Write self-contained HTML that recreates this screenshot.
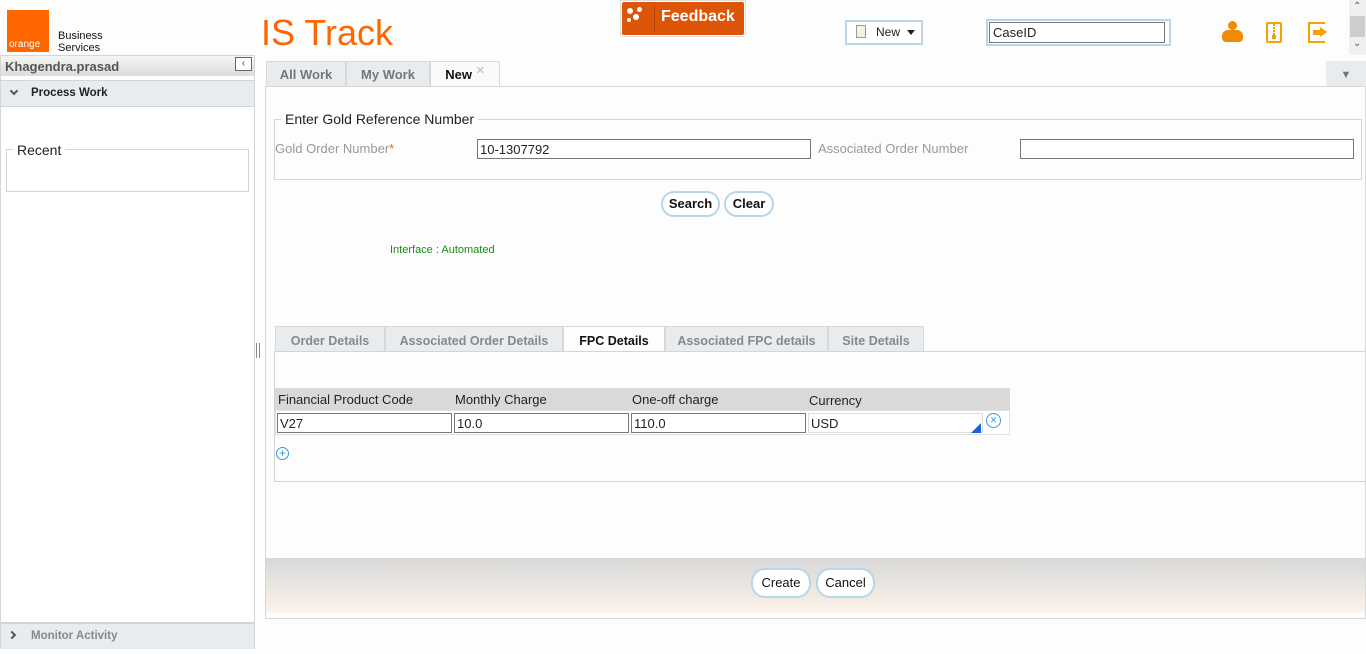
<!DOCTYPE html>
<html><head><meta charset="utf-8"><style>
*{box-sizing:border-box;margin:0;padding:0}
body{width:1366px;height:654px;background:#fdfdfd;font-family:"Liberation Sans","DejaVu Sans",sans-serif;position:relative;overflow:hidden;font-size:13px;color:#222}
.a{position:absolute}
.inp{position:absolute;background:#fff;border:1px solid #777;height:20px;font-size:13px;padding:2px 2px;line-height:15px}
.btn{position:absolute;background:#fff;border:2px solid #b9d6e8;border-radius:14px;font-weight:bold;font-size:13px;text-align:center;color:#111}
.tab{position:absolute;top:61px;height:26px;background:#e9ecef;border:1px solid #d8d8d8;color:#777;font-weight:bold;font-size:13px;text-align:center;line-height:26px}
.itab{position:absolute;top:326px;height:26px;background:#e9ecef;border:1px solid #d8d8d8;color:#888;font-weight:bold;font-size:12.5px;text-align:center;line-height:28px}
</style></head><body>
<div class="a" style="left:7px;top:10px;width:42px;height:42px;background:#ff6600"><span class="a" style="left:2px;bottom:2px;color:#fff;font-size:10px">orange</span></div>
<div class="a" style="left:58px;top:30px;font-size:11px;line-height:12px;color:#111">Business<br>Services</div>
<div class="a" style="left:261px;top:11px;font-size:36px;color:#ff6600;line-height:44px">IS Track</div>
<div class="a" style="left:620px;top:0;width:126px;height:37px;border:1px solid #ddd;background:#fff;border-radius:0 0 3px 3px"></div>
<div class="a" style="left:622px;top:2px;width:122px;height:33px;background:#dc5508;border-radius:2px"></div>
<div class="a" style="left:654px;top:5px;width:1px;height:27px;background:#b8440a"></div>
<div class="a" style="left:627px;top:8px;width:6px;height:6px;border-radius:3px;background:#fff"></div>
<div class="a" style="left:633px;top:14px;width:6px;height:6px;border-radius:3px;background:#fff"></div>
<div class="a" style="left:627px;top:18px;width:4px;height:4px;border-radius:2px;background:#fff"></div>
<div class="a" style="left:637px;top:7px;width:5px;height:5px;border-radius:3px;background:#fff"></div>
<div class="a" style="left:661px;top:8px;color:#fff;font-size:16px;font-weight:bold">Feedback</div>
<div class="a" style="left:845px;top:20px;width:78px;height:25px;border:2px solid #b9d6e8;background:#fff"></div>
<div class="a" style="left:856px;top:25px;width:10px;height:13px;border:1px solid #999;background:#f7f1e4"></div>
<div class="a" style="left:876px;top:25px;font-size:12px">New</div>
<div class="a" style="left:907px;top:30px;border-left:4px solid transparent;border-right:4px solid transparent;border-top:5px solid #222"></div>
<div class="a" style="left:986px;top:19px;width:185px;height:27px;border:2px solid #b9d6e8;background:#fff"></div>
<div class="a" style="left:989px;top:22px;width:176px;height:21px;border:1px solid #777;padding:2px 3px;font-size:13px">CaseID</div>
<!-- icons -->
<div class="a" style="left:1228px;top:21px;width:9px;height:9px;border-radius:5px;background:#f08a00"></div>
<div class="a" style="left:1222px;top:30px;width:21px;height:12px;border-radius:6px 6px 4px 4px;background:#f08a00"></div>
<div class="a" style="left:1266px;top:22px;width:16px;height:21px;border:2px solid #f5a100;border-radius:2px"></div>
<div class="a" style="left:1273px;top:24px;width:2px;height:12px;background:repeating-linear-gradient(#f5a100 0 2px,transparent 2px 3px)"></div>
<div class="a" style="left:1272px;top:35px;width:4px;height:4px;background:#f5a100"></div>
<div class="a" style="left:1308px;top:22px;width:17px;height:21px;border:2px solid #f5a100;border-right:none"></div>
<div class="a" style="left:1313px;top:30px;width:7px;height:5px;background:#f5a100"></div>
<div class="a" style="left:1320px;top:27px;border-top:5.5px solid transparent;border-bottom:5.5px solid transparent;border-left:7px solid #f5a100"></div>
<div class="a" style="left:1349px;top:0;width:17px;height:55px;background:#f0f0f0"></div>
<div class="a" style="left:1350px;top:16px;width:15px;height:21px;background:#cdcdcd"></div>
<div class="a" style="left:1353px;top:1px;font-size:10px;color:#555">&#8963;</div>
<div class="a" style="left:1353px;top:38px;font-size:10px;color:#555">&#8964;</div>
<div class="a" style="left:0;top:55px;width:255px;height:594px;border:1px solid #d5d5d5;background:#fff"></div>
<div class="a" style="left:1px;top:56px;width:253px;height:20px;background:linear-gradient(#f5f5f5,#dcdcdc);font-weight:bold;color:#555;font-size:13px;padding:3px 4px">Khagendra.prasad</div>
<div class="a" style="left:235px;top:57px;width:17px;height:14px;border:1px solid #666;background:#fff;font-size:10px;text-align:center;line-height:12px;color:#444">&lsaquo;</div>
<div class="a" style="left:1px;top:80px;width:253px;height:27px;background:#e9ecef;border-top:1px solid #d5d5d5;border-bottom:1px solid #d5d5d5;font-weight:bold;font-size:11.5px;padding:6px 30px">Process Work</div>
<div class="a" style="left:11px;top:88px;width:6px;height:6px;border-right:2px solid #555;border-bottom:2px solid #555;transform:rotate(45deg)"></div>
<div class="a" style="left:6px;top:149px;width:243px;height:43px;border:1px solid #d5d5d5"></div>
<div class="a" style="left:13px;top:142px;background:#fff;padding:0 4px;font-size:14px">Recent</div>
<div class="a" style="left:1px;top:622px;width:253px;height:27px;background:#e9ecef;border-top:2px solid #d5d5d5;font-weight:bold;color:#888;font-size:11.5px;padding:6px 30px">Monitor Activity</div>
<div class="a" style="left:9px;top:632px;width:6px;height:6px;border-right:2px solid #555;border-bottom:2px solid #555;transform:rotate(-45deg)"></div>
<div class="a" style="left:256px;top:343px;width:4px;height:15px;border-left:1px solid #888;border-right:1px solid #888"></div>
<div class="tab" style="left:266px;width:80px">All Work</div>
<div class="tab" style="left:346px;width:84px">My Work</div>
<div class="tab" style="left:430px;width:70px;background:#fafafa;color:#111">New <span style="color:#bbb;font-size:11px;vertical-align:top;line-height:18px">✕</span></div>
<div class="a" style="left:1326px;top:61px;width:40px;height:26px;background:#e9ecef;color:#777;text-align:center;line-height:28px;font-size:11px">▼</div>
<div class="a" style="left:265px;top:86px;width:1101px;height:533px;border:1px solid #d8d8d8;background:#fdfdfd"></div>
<div class="a" style="left:274px;top:119px;width:1088px;height:61px;border:1px solid #d5d5d5"></div>
<div class="a" style="left:281px;top:111px;background:#fdfdfd;padding:0 4px;font-size:14px">Enter Gold Reference Number</div>
<div class="a" style="left:275px;top:141px;color:#999;font-size:13px">Gold Order Number<span style="color:#e07020">*</span></div>
<div class="inp" style="left:477px;top:139px;width:334px">10-1307792</div>
<div class="a" style="left:818px;top:141px;color:#999;font-size:13px">Associated Order Number</div>
<div class="inp" style="left:1020px;top:139px;width:334px"></div>
<div class="btn" style="left:661px;top:191px;width:59px;height:26px;line-height:22px">Search</div>
<div class="btn" style="left:724px;top:191px;width:50px;height:26px;line-height:22px">Clear</div>
<div class="a" style="left:390px;top:244px;color:#1a8a1a;font-size:11px">Interface : Automated</div>
<div class="itab" style="left:275px;width:110px">Order Details</div>
<div class="itab" style="left:385px;width:178px">Associated Order Details</div>
<div class="itab" style="left:563px;width:102px;background:#fdfdfd;color:#111">FPC Details</div>
<div class="itab" style="left:665px;width:163px">Associated FPC details</div>
<div class="itab" style="left:828px;width:96px">Site Details</div>
<div class="a" style="left:274px;top:351px;width:1092px;height:131px;border:1px solid #d5d5d5;border-right:none"></div>
<div class="a" style="left:275px;top:388px;width:735px;height:22px;background:#d9d9d9"></div>
<div class="a" style="left:275px;top:410px;width:735px;height:25px;border:1px solid #e0e0e0;background:#fff"></div>
<div class="a" style="left:278px;top:392px">Financial Product Code</div>
<div class="a" style="left:455px;top:392px">Monthly Charge</div>
<div class="a" style="left:632px;top:392px">One-off charge</div>
<div class="a" style="left:809px;top:393px">Currency</div>
<div class="inp" style="left:277px;top:413px;width:175px">V27</div>
<div class="inp" style="left:454px;top:413px;width:175px">10.0</div>
<div class="inp" style="left:631px;top:413px;width:175px">110.0</div>
<div class="inp" style="left:808px;top:413px;width:175px;border-color:#ddd">USD</div>
<div class="a" style="left:971px;top:423px;border-left:10px solid transparent;border-bottom:10px solid #1565d8"></div>
<div class="a" style="left:986px;top:413px;width:15px;height:15px;border:1px solid #3a9ad9;border-radius:8px;color:#3a9ad9;font-size:9px;text-align:center;line-height:13px">✕</div>
<div class="a" style="left:276px;top:447px;width:13px;height:13px;border:1px solid #3a9ad9;border-radius:7px;color:#3a9ad9;font-size:12px;text-align:center;line-height:11px">+</div>
<div class="a" style="left:266px;top:558px;width:1099px;height:55px;background:linear-gradient(#d8d8d8,#fdf3ea)"></div>
<div class="btn" style="left:751px;top:568px;width:60px;height:30px;line-height:26px;font-weight:normal">Create</div>
<div class="btn" style="left:816px;top:568px;width:59px;height:30px;line-height:26px;font-weight:normal">Cancel</div>
</body></html>
